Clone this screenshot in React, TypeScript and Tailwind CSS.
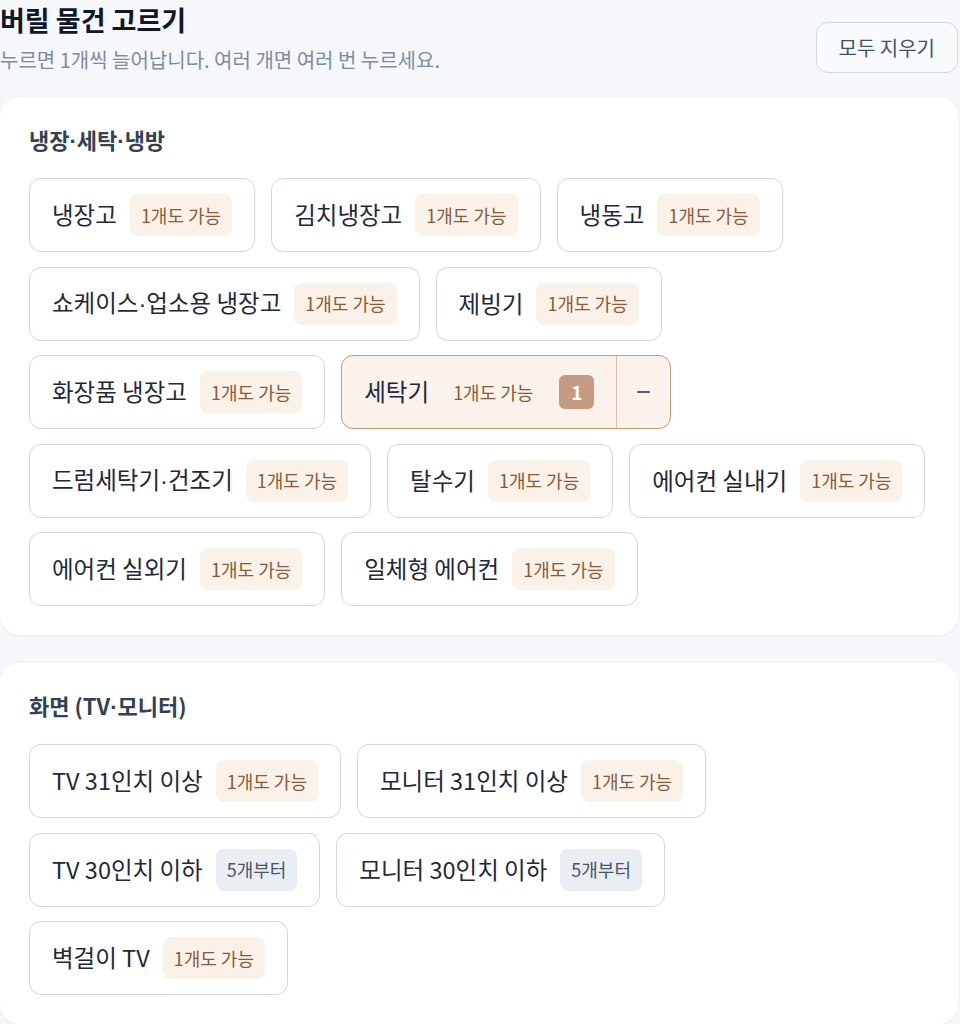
import { useState } from 'react';

type Item = { name: string; rule: 'one' | 'five' };

const sections: { title: string; items: Item[] }[] = [
  {
    title: '냉장·세탁·냉방',
    items: [
      { name: '냉장고', rule: 'one' },
      { name: '김치냉장고', rule: 'one' },
      { name: '냉동고', rule: 'one' },
      { name: '쇼케이스·업소용 냉장고', rule: 'one' },
      { name: '제빙기', rule: 'one' },
      { name: '화장품 냉장고', rule: 'one' },
      { name: '세탁기', rule: 'one' },
      { name: '드럼세탁기·건조기', rule: 'one' },
      { name: '탈수기', rule: 'one' },
      { name: '에어컨 실내기', rule: 'one' },
      { name: '에어컨 실외기', rule: 'one' },
      { name: '일체형 에어컨', rule: 'one' },
    ],
  },
  {
    title: '화면 (TV·모니터)',
    items: [
      { name: 'TV 31인치 이상', rule: 'one' },
      { name: '모니터 31인치 이상', rule: 'one' },
      { name: 'TV 30인치 이하', rule: 'five' },
      { name: '모니터 30인치 이하', rule: 'five' },
      { name: '벽걸이 TV', rule: 'one' },
    ],
  },
];

// the CJK font draws "·" full width; keep it narrow like the design
function Dotted({ text }: { text: string }) {
  const parts = text.split('·');
  return (
    <>
      {parts.map((p, i) => (
        <span key={i}>
          {i > 0 && <span style={{ fontFamily: '"Liberation Sans", sans-serif' }}>·</span>}
          {p}
        </span>
      ))}
    </>
  );
}

function RuleBadge({ rule, active }: { rule: Item['rule']; active: boolean }) {
  if (rule === 'five') {
    return (
      <span className="flex h-[42px] items-center rounded-lg bg-[#e9eef4] px-[11px] text-[18px] text-[#475569]">
        5개부터
      </span>
    );
  }
  return (
    <span
      className={`flex h-[42px] items-center rounded-lg px-[11px] text-[18px] text-[#8a5a3b] ${
        active ? 'bg-transparent' : 'bg-[#faf1e8]'
      }`}
    >
      1개도 가능
    </span>
  );
}

function Chip({ item, count, onAdd, onRemove }: { item: Item; count: number; onAdd: () => void; onRemove: () => void }) {
  const active = count > 0;
  return (
    <div
      className={`flex h-[74px] items-stretch rounded-xl border-[1.5px] ${
        active ? 'border-[#c99a80] bg-[#fbf2eb]' : 'border-[#cfd8e4] bg-white'
      }`}
    >
      <button onClick={onAdd} className="flex items-center gap-[13px] px-[22px]">
        <span className="text-[23.5px] text-[#1e293b]">
          <Dotted text={item.name} />
        </span>
        <RuleBadge rule={item.rule} active={active} />
        {active && (
          <span className="ml-[2px] flex h-[34px] w-[35px] items-center justify-center rounded-md bg-[#c49a83] text-[19px] font-bold text-white">
            {count}
          </span>
        )}
      </button>
      {active && (
        <button
          onClick={onRemove}
          className="flex w-[54px] items-center justify-center border-l-[1.5px] border-[#dcc0ae]"
          aria-label="빼기"
        >
          <span className="h-[2.5px] w-[13px] rounded-full bg-[#4b5d78]" />
        </button>
      )}
    </div>
  );
}

export default function App() {
  const [counts, setCounts] = useState<Record<string, number>>({ 세탁기: 1 });

  const add = (name: string) => setCounts((c) => ({ ...c, [name]: (c[name] ?? 0) + 1 }));
  const remove = (name: string) => setCounts((c) => ({ ...c, [name]: Math.max(0, (c[name] ?? 0) - 1) }));

  return (
    <div
      className="min-h-screen bg-[#f5f7fb] pr-[2px]"
      style={{ fontFamily: '"Noto Sans CJK KR", "Noto Sans", sans-serif' }}
    >
      {/* Header */}
      <div className="flex items-start justify-between">
        <div>
          <h1 className="text-[27px] font-bold leading-[40px] text-[#0f172a]">버릴 물건 고르기</h1>
          <p className="mt-[8px] text-[20px] leading-[24px] text-[#7b8da6]">
            누르면 1개씩 늘어납니다. 여러 개면 여러 번 누르세요.
          </p>
        </div>
        <button
          onClick={() => setCounts({})}
          className="mt-[22px] h-[51px] rounded-xl border-[1.5px] border-[#cfd8e4] bg-[#f8fafc] px-[22px] text-[20px] text-[#3f516b]"
        >
          모두 지우기
        </button>
      </div>

      {/* Sections */}
      <div className="mt-[24px] flex flex-col gap-[28px]">
        {sections.map((section) => (
          <div key={section.title} className="rounded-[20px] bg-white px-[29px] pb-[29px] pt-[28px] shadow-[0_1px_3px_rgba(15,23,42,0.05)]">
            <h2 className="mb-[22px] text-[22px] font-bold leading-[28px] text-[#334155]">
              <Dotted text={section.title} />
            </h2>
            <div className="flex flex-wrap gap-x-4 gap-y-[14.5px]">
              {section.items.map((item) => (
                <Chip
                  key={item.name}
                  item={item}
                  count={counts[item.name] ?? 0}
                  onAdd={() => add(item.name)}
                  onRemove={() => remove(item.name)}
                />
              ))}
            </div>
          </div>
        ))}
      </div>
    </div>
  );
}
